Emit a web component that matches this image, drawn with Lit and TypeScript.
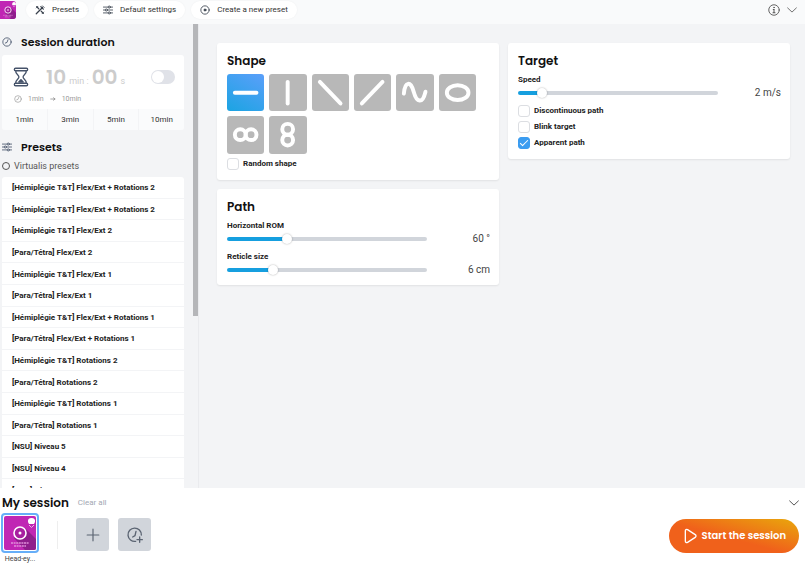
import { LitElement, html, css, svg } from "lit";
import { customElement, property, state } from "lit/decorators.js";
import { classMap } from "lit/directives/class-map.js";
import { styleMap } from "lit/directives/style-map.js";

const icon = (name: string, body: unknown, box = "0 0 24 24") => html`
  <svg class="icon ${name}" viewBox=${box} fill="none" stroke="currentColor" stroke-width="2"
    stroke-linecap="round" stroke-linejoin="round" aria-hidden="true">${body}</svg>`;

const sliders = svg`<path d="M1 5h11M18 5h5M1 12h4M11 12h12M1 19h11M18 19h5"/><circle cx="15" cy="5" r="2.6"/><circle cx="8" cy="12" r="2.6"/><circle cx="15" cy="19" r="2.6"/>`;
const clock = svg`<circle cx="12" cy="12" r="10"/><path d="M14.500 6.500L12 13l-4 1.500"/>`;
const tools = svg`<path d="M3 21L18 6M14 4l6 6M4 4l5 5M15 15l5 5" stroke-width="3"/><path d="M3 7l4-4M17 21l4-4M18 2l4 4"/>`;
const disc = svg`<circle cx="12" cy="12" r="10"/><circle cx="12" cy="12" r="2.500" fill="currentColor"/>`;
const info = svg`<circle cx="12" cy="12" r="10.500" stroke-width="1.800"/><path d="M12 11v6M10.500 11H12M10 17.500h4"/><circle cx="12" cy="7" r="1" fill="currentColor" stroke-width="1"/>`;
const chevron = svg`<path d="M1.500 7l10.500 10L22.500 7"/>`;
const hourglass = svg`<path d="M5.500 1.500h13q1.500 0 1.500 1.500t-1.500 1.500h-13Q4 4.500 4 3t1.500-1.500zM5.500 19.500h13q1.500 0 1.500 1.500t-1.500 1.500h-13Q4 22.500 4 21t1.500-1.500zM5.500 4.500c0 4.500 4 5 4 7.500s-4 3-4 7.500M18.500 4.500c0 4.500-4 5-4 7.500s4 3 4 7.500" stroke-width="1.600"/><path d="M9.500 18l2.500-2.500 2.500 2.500z"/>`;
const arrow = svg`<path d="M3 12h17M14 7l6 5-6 5" stroke-width="3"/>`;
const plus = svg`<path d="M12 2v20M2 12h20"/>`;
const clockPlus = svg`<path d="M21.500 12A10 10 0 1 0 13 21.500"/><path d="M13.500 6.500L12 13l-3.500 2M19 15v8M15 19h8"/>`;
const play = svg`<path d="M5 4.500v15c0 2 1.500 3 3.300 2l11.500-7.500c1.600-1 1.600-3 0-4L8.300 2.500C6.500 1.500 5 2.500 5 4.500z"/>`;

const emblem = html`
  <svg class="emblem" viewBox="0 0 34 34" preserveAspectRatio="xMidYMid slice" aria-hidden="true">
    <rect width="34" height="34" fill="#c026b4"/>
    <path d="M22 12L34 24V34H22L11 22z" fill="#8f1d8c"/>
    <circle cx="17" cy="17" r="6" fill="#a81fa0" stroke="#fff" stroke-width="1.600"/>
    <circle cx="17" cy="17" r="1.500" fill="#fff"/>
    <path d="M25 6q-.5-4 3.500-4t3.500 4l-1 2h-5z" fill="#fff"/>
    <path d="M26 9l2.500 2.500L31 9" fill="none" stroke="#eab5e6"/>
    <path d="M8 27h18M11 30h12" stroke="#df8ed9" stroke-width="1.500" stroke-dasharray="2 .6"/>
  </svg>`;

const shapes = [
  { name: "Horizontal line", art: svg`<path d="M8 19h22"/>` },
  { name: "Vertical line", art: svg`<path d="M19 8v22"/>` },
  { name: "Falling diagonal", art: svg`<path d="M8 8l21 22"/>` },
  { name: "Rising diagonal", art: svg`<path d="M8 30L29 8"/>` },
  { name: "Wave", art: svg`<path d="M8 20C9 7 15 7 18 18S27 31 30 18"/>` },
  { name: "Ellipse", art: svg`<ellipse cx="19" cy="19" rx="11" ry="7.500"/>` },
  { name: "Infinity", art: svg`<circle cx="13.500" cy="19" r="5.500"/><circle cx="24.500" cy="19" r="5.500"/>` },
  { name: "Figure eight", art: svg`<circle cx="19" cy="13.500" r="5.500"/><circle cx="19" cy="24.500" r="5.500"/>` },
];

const presets = [
  "[Hémiplégie T&T] Flex/Ext + Rotations 2",
  "[Hémiplégie T&T] Flex/Ext + Rotations 2",
  "[Hémiplégie T&T] Flex/Ext 2",
  "[Para/Tétra] Flex/Ext 2",
  "[Hémiplégie T&T] Flex/Ext 1",
  "[Para/Tétra] Flex/Ext 1",
  "[Hémiplégie T&T] Flex/Ext + Rotations 1",
  "[Para/Tétra] Flex/Ext + Rotations 1",
  "[Hémiplégie T&T] Rotations 2",
  "[Para/Tétra] Rotations 2",
  "[Hémiplégie T&T] Rotations 1",
  "[Para/Tétra] Rotations 1",
  "[NSU] Niveau 5",
  "[NSU] Niveau 4",
  "[NSU] Niveau 3",
];

const base = css`
  *, *::before { box-sizing: border-box; }
  h2, ul { margin: 0; padding: 0; }
  button { font: inherit; color: inherit; border: 0; padding: 0; background: none; cursor: pointer; }
  .icon { display: block; flex: none; width: 10px; height: 10px; }
  h2 { font: 600 12px/20px Poppins, Inter, sans-serif; color: #111; }
`;

@customElement("range-field")
class RangeField extends LitElement {
  @property() label = "";
  @property() unit = "";
  @property({ type: Number }) min = 0;
  @property({ type: Number }) max = 100;
  @property({ type: Number }) value = 0;

  static styles = [base, css`
    :host { display: block; }
    label { display: block; font-weight: 700; font-size: 8px; line-height: 12px; color: #222; }
    .row { display: flex; align-items: center; justify-content: space-between; height: 14px; }
    input {
      --fill: calc(5px + var(--part) * (100% - 10px));
      appearance: none; width: 76%; height: 4px; margin: 0; border-radius: 2px;
      background: linear-gradient(to right, #169fdf var(--fill), #d1d5db var(--fill));
    }
    input::-webkit-slider-thumb {
      appearance: none; width: 10px; height: 10px; border-radius: 50%;
      background: #fff; box-shadow: 0 0 2px #0005;
    }
    output { font-size: 10px; color: #444; white-space: nowrap; }
  `];

  render() {
    const part = (this.value - this.min) / (this.max - this.min);
    return html`
      <label for="range">${this.label}</label>
      <div class="row">
        <input id="range" type="range" .min=${String(this.min)} .max=${String(this.max)} .value=${String(this.value)}
          style=${styleMap({ "--part": String(part) })}
          @input=${(e: Event) => (this.value = Number((e.target as HTMLInputElement).value))}>
        <output for="range">${this.value} ${this.unit}</output>
      </div>`;
  }
}

@customElement("check-field")
class CheckField extends LitElement {
  @property() label = "";
  @property({ type: Boolean }) checked = false;

  static styles = [base, css`
    :host { display: block; }
    label { display: flex; align-items: center; gap: 4px; height: 16px; font-weight: 700; font-size: 8px; color: #222; }
    input {
      appearance: none; display: grid; place-items: center; width: 12px; height: 12px; margin: 0;
      border: 1px solid #dcdee2; border-radius: 3px; background: #fff;
    }
    input:checked { border-color: #3b9cf0; background: #3b9cf0; }
    input:checked::before {
      content: ""; width: 8px; height: 4px; margin-bottom: 3px; rotate: -45deg;
      border: solid #fff; border-width: 0 0 1px 1px;
    }
  `];

  render() {
    return html`<label><input type="checkbox" .checked=${this.checked}>${this.label}</label>`;
  }
}

@customElement("duration-card")
class DurationCard extends LitElement {
  static styles = [base, css`
    :host { display: block; background: #fff; border-radius: 3px; overflow: hidden; }
    .clock { display: flex; align-items: center; padding: 7px 9px 0; height: 36px; }
    .hourglass { width: 20px; height: 20px; color: #46536a; margin-right: 15px; }
    .time { flex: 1; display: flex; align-items: baseline; gap: 3px; font: 600 20px/26px Poppins, Inter, sans-serif; color: #ccc; }
    .time small { font: 400 9px/12px Roboto, sans-serif; color: #ccc; }
    .switch {
      appearance: none; width: 24px; height: 14px; margin: 0; padding: 1px;
      border-radius: 7px; background: #e0e2e8;
    }
    .switch::before { content: ""; display: block; width: 12px; height: 12px; border-radius: 50%; background: #fff; }
    .switch:checked { background: #169fdf; }
    .switch:checked::before { margin-left: auto; }
    .span { display: flex; align-items: center; gap: 6px; height: 16px; padding: 0 12px; margin-bottom: 2px; font-size: 7px; color: #999; }
    .span .icon { width: 8px; height: 8px; }
    .span .arrow { width: 6px; height: 6px; color: #888; }
    .choices { display: grid; grid-template-columns: repeat(4, 1fr); gap: 1px; background: #f3f4f6; }
    .choices button { height: 21px; background: #fafbfc; font-size: 8px; color: #333; }
  `];

  render() {
    return html`
      <div class="clock">
        ${icon("hourglass", hourglass)}
        <div class="time">10<small>min :</small>00<small>s</small></div>
        <input class="switch" type="checkbox" role="switch" aria-label="Limit duration">
      </div>
      <div class="span">${icon("", clock)}<span>1min</span>${icon("arrow", arrow)}<span>10min</span></div>
      <div class="choices">${["1min", "3min", "5min", "10min"].map((t) => html`<button>${t}</button>`)}</div>`;
  }
}

@customElement("app-root")
class AppRoot extends LitElement {
  @state() private shape = 0;

  static styles = [base, css`
    :host {
      display: flex; flex-direction: column; height: 100vh; overflow: hidden;
      background: #f3f4f6; color: #333; font: 400 8px/12px Roboto, sans-serif;
    }
    header { flex: none; display: flex; align-items: center; gap: 6px; height: 24px; padding: 0 8px 4px 0; background: #f9fafb; }
    header .emblem { width: 16px; height: 18px; margin-right: 4px; border-radius: 0 3px 3px 0; }
    .pill { display: flex; align-items: center; gap: 7px; height: 18px; padding: 0 9px; border-radius: 9px; background: #fff; box-shadow: 0 0 2px #0000000d; }
    .pill .icon { color: #39414d; }
    .tail { display: flex; align-items: center; gap: 7px; margin-left: auto; color: #555; }
    .info { width: 12px; height: 12px; }

    .body { flex: 1; min-height: 0; display: flex; }
    aside { flex: none; width: 199px; display: flex; justify-content: space-between; overflow: hidden; border-right: 1px solid #eaebee; }
    .side { width: 184px; padding: 8px 0 0 2px; }
    .heading { display: flex; align-items: center; gap: 9px; height: 20px; }
    .heading h2 { font-size: 11px; }
    .heading .icon { color: #46536a; }
    duration-card { margin: 3px 0 7px; }
    .group { display: flex; align-items: center; gap: 4px; height: 18px; margin-bottom: 2px; font-size: 9px; color: #555; }
    .group input { appearance: none; width: 8px; height: 8px; margin: 0; border: 1px solid #555; border-radius: 50%; }
    .presets { display: grid; grid-template-rows: repeat(15, 1fr); height: 324px; list-style: none; background: #fff; border-radius: 3px; }
    .presets li { display: grid; border-bottom: 1px solid #f3f4f6; }
    .presets button { padding: 2px 0 0 10px; text-align: left; font-weight: 700; color: #222; }
    .track { width: 5px; }
    .thumb { height: 63%; background: #b5b6b9; }

    main { flex: 1; display: grid; grid-template-columns: 1fr 1fr; gap: 9px; align-items: start; padding: 19px 15px 0 18px; }
    .column { display: grid; gap: 9px; }
    .card { padding: 8px 9px 8px 10px; border-radius: 3px; background: #fff; box-shadow: 0 1px 2px #00000014; }
    .card h2 { margin-bottom: 3px; }
    .shapes { display: grid; grid-template-columns: repeat(6, 1fr); gap: 5px; max-width: 249px; margin-bottom: 2px; }
    .shape { aspect-ratio: 1; border-radius: 3px; background: #b8b8b8; }
    .shape.on { background: linear-gradient(30deg, #1ba4e2, #5b9ffa); }
    .shape svg { display: block; width: 100%; fill: none; stroke: #fff; stroke-width: 4; stroke-linecap: round; }
    .fields { display: grid; gap: 5px; }
    .checks { margin-top: 3px; }

    footer { flex: none; display: flex; justify-content: space-between; height: 76px; padding: 5px 6px 0 1px; background: #fff; }
    .title { display: flex; align-items: center; gap: 9px; height: 20px; padding-left: 1px; }
    .clear { color: #a3a8b3; }
    .items { display: flex; align-items: flex-start; gap: 9px; }
    .item { display: grid; justify-items: center; font-size: 7px; line-height: 12px; color: #444; }
    .frame { display: block; padding: 1px; width: 38px; height: 40px; border: 2px solid #66aef8; border-radius: 4px; }
    .frame .emblem { display: block; width: 100%; height: 100%; border-radius: 2px; }
    .rule { width: 1px; height: 28px; margin: 8px 9px 0; background: #eee; }
    .add { display: grid; place-items: center; width: 33px; height: 33px; margin-top: 5px; border-radius: 3px; background: #d1d5db; color: #5b6472; }
    .add .icon { width: 14px; height: 14px; }
    .add .timer { width: 16px; height: 16px; }
    .right { display: flex; flex-direction: column; align-items: flex-end; gap: 11px; padding-top: 5px; }
    .start {
      display: flex; align-items: center; gap: 4px; height: 34px; padding: 0 13px; border-radius: 17px;
      background: linear-gradient(15deg, #f0611b 45%, #e9a80c); color: #fff;
      font: 600 10px/16px Poppins, Inter, sans-serif; white-space: nowrap;
    }
    .start .icon { width: 16px; height: 16px; }
  `];

  render() {
    return html`
      <header>
        ${emblem}
        <button class="pill">${icon("", tools)}Presets</button>
        <button class="pill">${icon("", sliders)}Default settings</button>
        <button class="pill">${icon("", disc)}Create a new preset</button>
        <div class="tail">
          <button aria-label="Information">${icon("info", info)}</button>
          <button aria-label="More">${icon("", chevron)}</button>
        </div>
      </header>
      <div class="body">
        <aside>
          <div class="side">
            <div class="heading">${icon("", clock)}<h2>Session duration</h2></div>
            <duration-card></duration-card>
            <div class="heading">${icon("", sliders)}<h2>Presets</h2></div>
            <label class="group"><input type="radio" name="group">Virtualis presets</label>
            <ul class="presets">${presets.map((p) => html`<li><button>${p}</button></li>`)}</ul>
          </div>
          <div class="track"><div class="thumb"></div></div>
        </aside>
        <main>
          <div class="column">
            <section class="card">
              <h2>Shape</h2>
              <div class="shapes">
                ${shapes.map((s, i) => html`
                  <button class=${classMap({ shape: true, on: i === this.shape })} aria-label=${s.name}
                    @click=${() => (this.shape = i)}><svg viewBox="0 0 38 38">${s.art}</svg></button>`)}
              </div>
              <check-field label="Random shape"></check-field>
            </section>
            <section class="card">
              <h2>Path</h2>
              <div class="fields">
                <range-field label="Horizontal ROM" unit="°" min="5" max="195" value="60"></range-field>
                <range-field label="Reticle size" unit="cm" min="1" max="24" value="6"></range-field>
              </div>
            </section>
          </div>
          <section class="card">
            <h2>Target</h2>
            <range-field label="Speed" unit="m/s" min="0" max="20" value="2"></range-field>
            <div class="checks">
              <check-field label="Discontinuous path"></check-field>
              <check-field label="Blink target"></check-field>
              <check-field label="Apparent path" checked></check-field>
            </div>
          </section>
        </main>
      </div>
      <footer>
        <div>
          <div class="title"><h2>My session</h2><button class="clear">Clear all</button></div>
          <div class="items">
            <button class="item"><span class="frame">${emblem}</span>Head-ey...</button>
            <div class="rule"></div>
            <button class="add" aria-label="Add exercise">${icon("", plus)}</button>
            <button class="add" aria-label="Add pause">${icon("timer", clockPlus)}</button>
          </div>
        </div>
        <div class="right">
          <button aria-label="Collapse">${icon("", chevron)}</button>
          <button class="start">${icon("", play)}Start the session</button>
        </div>
      </footer>`;
  }
}
